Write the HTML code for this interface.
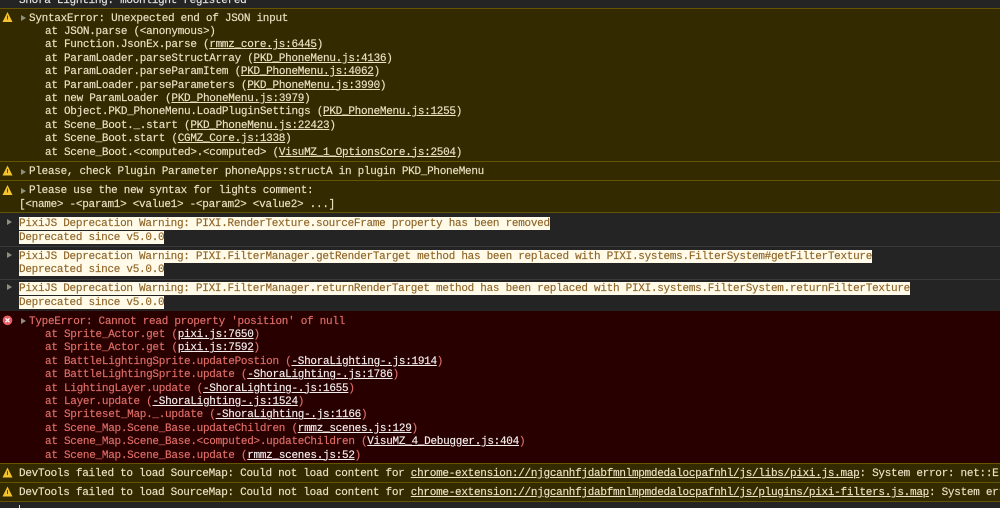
<!DOCTYPE html>
<html><head><meta charset="utf-8">
<style>
html,body{margin:0;padding:0;width:1000px;height:508px;overflow:hidden;background:#242424}
body{position:relative;font:11px/15.6px "Liberation Mono",monospace;letter-spacing:-.282px;color:#ece2c4}
.b{position:absolute;left:0;width:1000px;box-sizing:border-box}
.w{background:#332a00;border-top:1px solid #665500;}
.d{background:#242424;border-top:1px solid #3a3a3a}
.e{background:#290000;}
.t{position:absolute;white-space:pre;height:13.4px;font-weight:400;-webkit-text-stroke:.15px currentColor}
.er{color:#e06e68}
.er u{color:#f4eeee}
u{text-underline-offset:1px}
.h{background:#fffbe8;color:#8f6528}
.g{position:absolute;width:0;height:0;border-top:3px solid transparent;border-bottom:3px solid transparent;border-left:5px solid #8f8f80}
</style></head><body>
<div class="b" style="top:0;height:9px;background:#242424"></div>
<div class="b w" style="top:8px;height:153px"></div>
<div class="b w" style="top:161px;height:19px"></div>
<div class="b w" style="top:180px;height:33px;border-bottom:1px solid #665500"></div>
<div class="b d" style="top:213px;height:33px;border-top:0"></div>
<div class="b d" style="top:246px;height:33px"></div>
<div class="b d" style="top:279px;height:32px"></div>
<div class="b e" style="top:311px;height:153px"></div>
<div class="b w" style="top:463px;height:19px"></div>
<div class="b w" style="top:482px;height:20px;border-bottom:1px solid #665500"></div>

<div class="t" style="left:19px;top:-6px;color:#e6e6e6">Shora Lighting: moonlight registered</div>

<svg style="position:absolute;left:0;top:0" width="20" height="508">
<g fill="#f4c430"><path d="M7.5 12 L2.5 22 H12.5Z"/><path d="M7.5 165.5 L2.5 175.5 H12.5Z"/><path d="M7.5 185 L2.5 195 H12.5Z"/><path d="M7.5 467.5 L2.5 477.5 H12.5Z"/><path d="M7.5 486.5 L2.5 496.5 H12.5Z"/></g>
<g fill="#5a4800"><rect x="7" y="15.5" width="1" height="4"/><rect x="7" y="169" width="1" height="4"/><rect x="7" y="188.5" width="1" height="4"/><rect x="7" y="471" width="1" height="4"/><rect x="7" y="490" width="1" height="4"/></g>
<circle cx="7.5" cy="320.3" r="4.8" fill="#e85c66"/>
<path d="M5.5 318.3l4 4m0-4l-4 4" stroke="#fff" stroke-width="1.3"/>
</svg>
<div class="g" style="left:21px;top:15px"></div>
<div class="g" style="left:21px;top:169px"></div>
<div class="g" style="left:21px;top:188px"></div>
<div class="g" style="left:7px;top:219px"></div>
<div class="g" style="left:7px;top:252px"></div>
<div class="g" style="left:7px;top:284px"></div>
<div class="g" style="left:21px;top:318px"></div>

<div class="t" style="left:29px;top:11.5px">SyntaxError: Unexpected end of JSON input</div>
<div class="t" style="left:45px;top:25px">at JSON.parse (&lt;anonymous&gt;)</div>
<div class="t" style="left:45px;top:38.4px">at Function.JsonEx.parse (<u>rmmz_core.js:6445</u>)</div>
<div class="t" style="left:45px;top:51.8px">at ParamLoader.parseStructArray (<u>PKD_PhoneMenu.js:4136</u>)</div>
<div class="t" style="left:45px;top:65.2px">at ParamLoader.parseParamItem (<u>PKD_PhoneMenu.js:4062</u>)</div>
<div class="t" style="left:45px;top:78.6px">at ParamLoader.parseParameters (<u>PKD_PhoneMenu.js:3990</u>)</div>
<div class="t" style="left:45px;top:92px">at new ParamLoader (<u>PKD_PhoneMenu.js:3979</u>)</div>
<div class="t" style="left:45px;top:105.4px">at Object.PKD_PhoneMenu.LoadPluginSettings (<u>PKD_PhoneMenu.js:1255</u>)</div>
<div class="t" style="left:45px;top:118.8px">at Scene_Boot._.start (<u>PKD_PhoneMenu.js:22423</u>)</div>
<div class="t" style="left:45px;top:132.2px">at Scene_Boot.start (<u>CGMZ_Core.js:1338</u>)</div>
<div class="t" style="left:45px;top:145.6px">at Scene_Boot.&lt;computed&gt;.&lt;computed&gt; (<u>VisuMZ_1_OptionsCore.js:2504</u>)</div>

<div class="t" style="left:29px;top:165px">Please, check Plugin Parameter phoneApps:structA in plugin PKD_PhoneMenu</div>
<div class="t" style="left:29px;top:184px">Please use the new syntax for lights comment:</div>
<div class="t" style="left:19px;top:198px">[&lt;name&gt; -&lt;param1&gt; &lt;value1&gt; -&lt;param2&gt; &lt;value2&gt; ...]</div>

<div class="t h" style="left:19px;top:217px">PixiJS Deprecation Warning: PIXI.RenderTexture.sourceFrame property has been removed</div>
<div class="t h" style="left:19px;top:230.5px">Deprecated since v5.0.0</div>
<div class="t h" style="left:19px;top:249.5px">PixiJS Deprecation Warning: PIXI.FilterManager.getRenderTarget method has been replaced with PIXI.systems.FilterSystem#getFilterTexture</div>
<div class="t h" style="left:19px;top:263px">Deprecated since v5.0.0</div>
<div class="t h" style="left:19px;top:282px">PixiJS Deprecation Warning: PIXI.FilterManager.returnRenderTarget method has been replaced with PIXI.systems.FilterSystem.returnFilterTexture</div>
<div class="t h" style="left:19px;top:295.5px">Deprecated since v5.0.0</div>

<div class="t er" style="left:29px;top:314.5px">TypeError: Cannot read property 'position' of null</div>
<div class="t er" style="left:45px;top:328px">at Sprite_Actor.get (<u>pixi.js:7650</u>)</div>
<div class="t er" style="left:45px;top:341.4px">at Sprite_Actor.get (<u>pixi.js:7592</u>)</div>
<div class="t er" style="left:45px;top:354.8px">at BattleLightingSprite.updatePostion (<u>-ShoraLighting-.js:1914</u>)</div>
<div class="t er" style="left:45px;top:368.2px">at BattleLightingSprite.update (<u>-ShoraLighting-.js:1786</u>)</div>
<div class="t er" style="left:45px;top:381.6px">at LightingLayer.update (<u>-ShoraLighting-.js:1655</u>)</div>
<div class="t er" style="left:45px;top:395px">at Layer.update (<u>-ShoraLighting-.js:1524</u>)</div>
<div class="t er" style="left:45px;top:408.4px">at Spriteset_Map._.update (<u>-ShoraLighting-.js:1166</u>)</div>
<div class="t er" style="left:45px;top:421.8px">at Scene_Map.Scene_Base.updateChildren (<u>rmmz_scenes.js:129</u>)</div>
<div class="t er" style="left:45px;top:435.2px">at Scene_Map.Scene_Base.&lt;computed&gt;.updateChildren (<u>VisuMZ_4_Debugger.js:404</u>)</div>
<div class="t er" style="left:45px;top:448.6px">at Scene_Map.Scene_Base.update (<u>rmmz_scenes.js:52</u>)</div>

<div class="t" style="left:19px;top:467px">DevTools failed to load SourceMap: Could not load content for <u>chrome-extension://njgcanhfjdabfmnlmpmdedalocpafnhl/js/libs/pixi.js.map</u>: System error: net::E</div>
<div class="t" style="left:19px;top:486px">DevTools failed to load SourceMap: Could not load content for <u>chrome-extension://njgcanhfjdabfmnlmpmdedalocpafnhl/js/plugins/pixi-filters.js.map</u>: System err</div>
<div style="position:absolute;left:19px;top:505px;width:1px;height:3px;background:#ddd"></div>
</body></html>
